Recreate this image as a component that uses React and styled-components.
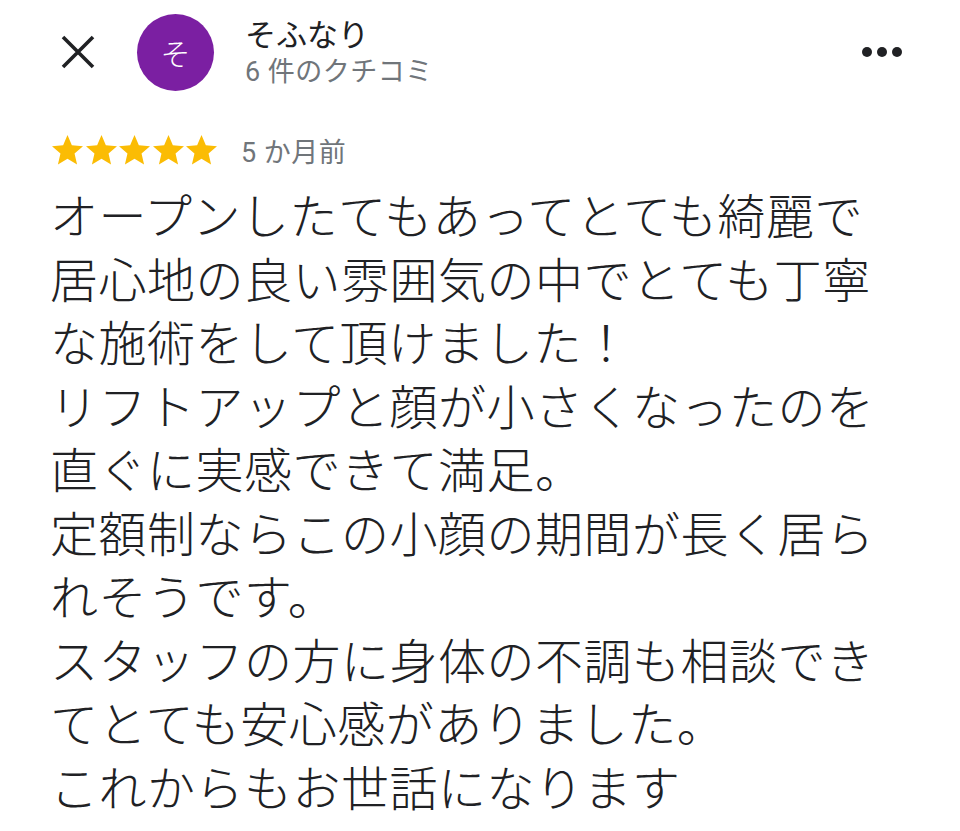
import React from "react";
import styled, { createGlobalStyle } from "styled-components";

const Global = createGlobalStyle`
  html, body { margin: 0; padding: 0; background: #ffffff; }
  body {
    font-family: "Noto Sans CJK JP", "Noto Sans", Roboto, sans-serif;
    color: #202124;
  }
`;

const Page = styled.div`
  width: 960px;
  min-height: 831px;
  background: #fff;
  overflow: hidden;
`;

const Header = styled.header`
  display: flex;
  align-items: center;
  height: 104px;
  padding: 0 58px 0 61px;
  box-sizing: border-box;
`;

const IconButton = styled.button`
  display: flex;
  align-items: center;
  justify-content: center;
  padding: 0;
  border: none;
  background: none;
  color: #202124;
  cursor: pointer;
`;

const Avatar = styled.div`
  width: 77px;
  height: 77px;
  border-radius: 50%;
  background: #7b1fa2;
  color: #fff;
  display: flex;
  align-items: center;
  justify-content: center;
  font-size: 30px;
  font-weight: 300;
  margin-left: 42px;
  flex-shrink: 0;
`;

const Author = styled.div`
  display: flex;
  flex-direction: column;
  margin-left: 31px;
  flex: 1;
`;

const Name = styled.div`
  font-size: 31px;
  line-height: 40px;
  font-weight: 400;
  color: #202124;
`;

const Sub = styled.div`
  font-family: Roboto, "Noto Sans CJK JP", sans-serif;
  font-size: 27px;
  line-height: 38px;
  letter-spacing: 0.5px;
  color: #70757a;
`;

const Rating = styled.div`
  display: flex;
  align-items: center;
  height: 40px;
  margin-top: 26px;
  padding-left: 52px;
`;

const Stars = styled.div`
  display: flex;
  gap: 2.5px;
  color: #fbbc04;
`;

const When = styled.span`
  font-family: Roboto, "Noto Sans CJK JP", sans-serif;
  margin-left: 24px;
  font-size: 27px;
  letter-spacing: 0.5px;
  color: #70757a;
`;

const Body = styled.p`
  margin: 12px 0 0;
  padding-left: 50px;
  font-size: 48px;
  font-weight: 300;
  line-height: 63.5px;
  letter-spacing: 0.5px;
  white-space: pre;
  color: #202124;
`;

const Star = () => (
  <svg width="31" height="29.5" viewBox="2 2 20 19" fill="currentColor">
    <path d="M12 17.27L18.18 21l-1.64-7.03L22 9.24l-7.19-.61L12 2 9.19 8.63 2 9.24l5.46 4.73L5.82 21z" />
  </svg>
);

const lines = [
  "オープンしたてもあってとても綺麗で",
  "居心地の良い雰囲気の中でとても丁寧",
  "な施術をして頂けました！",
  "リフトアップと顔が小さくなったのを",
  "直ぐに実感できて満足。",
  "定額制ならこの小顔の期間が長く居ら",
  "れそうです。",
  "スタッフの方に身体の不調も相談でき",
  "てとても安心感がありました。",
  "これからもお世話になります",
];

export default function App() {
  return (
    <Page>
      <Global />
      <Header>
        <IconButton aria-label="閉じる">
          <svg width="34" height="34" viewBox="0 0 34 34">
            <path d="M2 2L32 32M32 2L2 32" stroke="currentColor" strokeWidth="3.6" strokeLinecap="butt" />
          </svg>
        </IconButton>
        <Avatar>そ</Avatar>
        <Author>
          <Name>そふなり</Name>
          <Sub>6 件のクチコミ</Sub>
        </Author>
        <IconButton aria-label="その他">
          <svg width="40" height="10" viewBox="0 0 40 10" fill="currentColor">
            <circle cx="5" cy="5" r="5" />
            <circle cx="20" cy="5" r="5" />
            <circle cx="35" cy="5" r="5" />
          </svg>
        </IconButton>
      </Header>
      <Rating>
        <Stars>
          {[0, 1, 2, 3, 4].map((i) => (
            <Star key={i} />
          ))}
        </Stars>
        <When>5 か月前</When>
      </Rating>
      <Body>{lines.join("\n")}</Body>
    </Page>
  );
}
